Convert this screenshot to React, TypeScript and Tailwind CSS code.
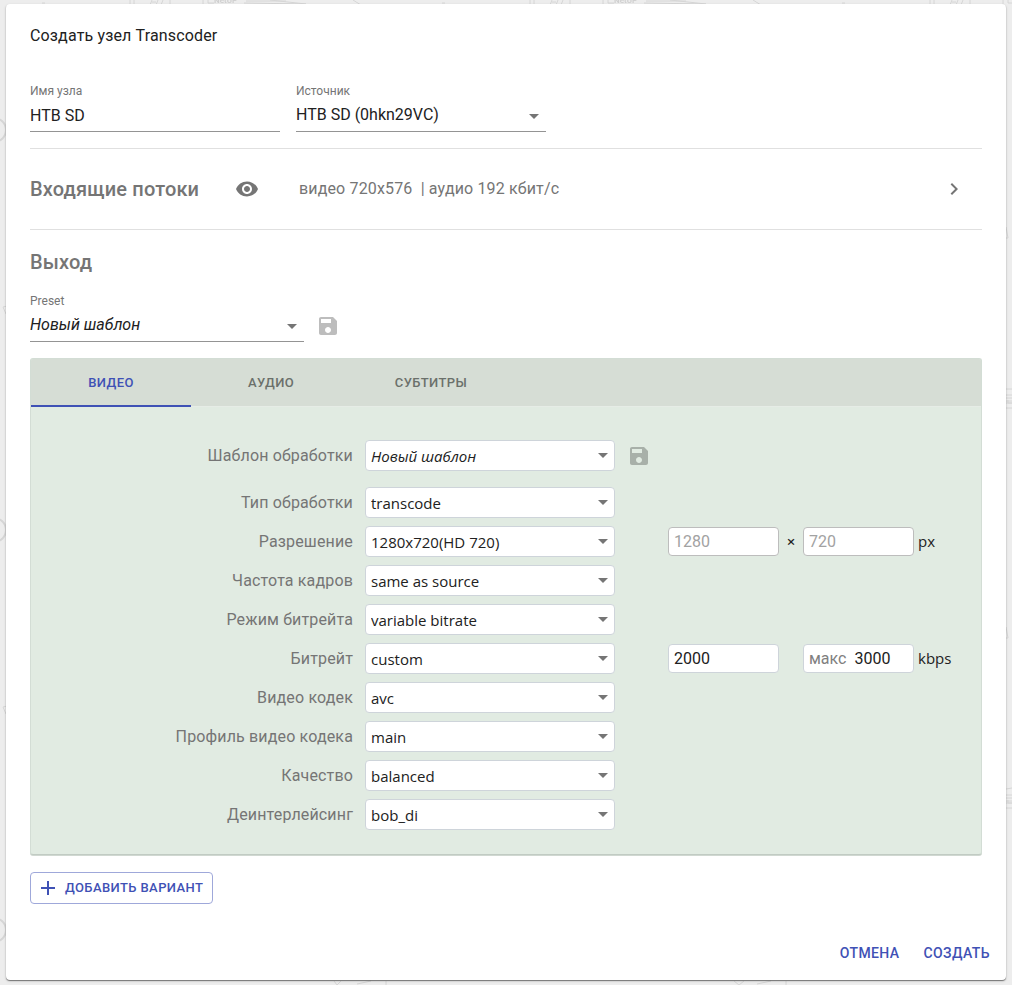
import { useState } from "react";
import type { ReactNode } from "react";

function DropArrow({ className }: { className: string }) {
  return (
    <svg viewBox="0 0 24 24" aria-hidden="true" className={`pointer-events-none absolute size-6 fill-[#757575] ${className}`}>
      <path d="M7 10l5 5 5-5z" />
    </svg>
  );
}

function SaveIcon({ className }: { className: string }) {
  return (
    <svg viewBox="0 0 24 24" aria-hidden="true" className={`size-6 ${className}`}>
      <path d="M17 3H5c-1.11 0-2 .9-2 2v14c0 1.1.89 2 2 2h14c1.1 0 2-.9 2-2V7l-4-4zm-5 16c-1.66 0-3-1.34-3-3s1.34-3 3-3 3 1.34 3 3-1.34 3-3 3zm3-10H5V5h10v4z" />
    </svg>
  );
}

function UnderlinedSelect({ id, label, value, className }: { id: string; label: string; value: string; className: string }) {
  return (
    <div className={className}>
      <label htmlFor={id} className="block text-xs leading-4 text-[#757575]">{label}</label>
      <div className="relative">
        <select id={id} defaultValue={value} className="h-[33px] w-full appearance-none border-b border-[#949494] bg-transparent pr-6 outline-none [font-style:inherit]">
          <option>{value}</option>
        </select>
        <DropArrow className="right-0 top-[5px]" />
      </div>
    </div>
  );
}

function FormRow({ id, label, value, italic = false, children }: { id: string; label: string; value: string; italic?: boolean; children?: ReactNode }) {
  return (
    <div className="flex h-[31px] items-center">
      <label htmlFor={id} className="w-[322px] shrink-0 text-right tracking-[0.15px] text-[#757575]">{label}</label>
      <div className="relative ml-3 w-[250px] shrink-0">
        <select
          id={id}
          defaultValue={value}
          className={`block h-[31px] w-full appearance-none rounded border border-[#ced4da] bg-white pt-0.5 pl-[5px] pr-6 font-['Open_Sans','Noto_Sans',sans-serif] text-[15px] outline-none ${italic ? "italic" : ""}`}
        >
          <option>{value}</option>
        </select>
        <DropArrow className="right-0 top-[3px]" />
      </div>
      {children}
    </div>
  );
}

function Backdrop() {
  return (
    <svg aria-hidden="true" className="absolute inset-0 size-full">
      <defs>
        <pattern id="doodles" width="400" height="400" patternUnits="userSpaceOnUse">
          <g fill="none" stroke="#d6d6d6">
            <circle cx="-6" cy="130" r="12" strokeWidth="2" />
            <path d="M3 307l4-1M3 307l3 7M42 3h3M130 0v5M134 0v5M150 5l2-5M156 5l2-5M152 2h4M163 0l-2 5M170 0v5M203 5V0M208 0v3h6M244 3l62 1M246 1h40M270 0l36 4M353 0l8 5" />
            <path d="M334 381l5 16M341 381l-3 14M357 388l29-6M386 381v6" />
          </g>
          <text x="214" y="3" fill="#d0d0d0" fontSize="8" fontWeight="700">NetUP</text>
        </pattern>
      </defs>
      <rect width="100%" height="100%" fill="url(#doodles)" />
      <path
        fill="none"
        stroke="#d6d6d6"
        d="M1006 227l2 11h-2M1006 389h6M1006 395h6M1006 398h6M1006 401h6M1006 403h6M1006 408h6M1006 627l2 11h-2M1006 789l6-1M1006 795h6M1006 798h6M1006 801h6M1006 803h6M1006 808h6M334 981l3 4 4-4M357 984l14-3M386 981v4M734 981l5 4 5-4M757 984l14-3M786 981v4"
      />
    </svg>
  );
}

const tabs = [
  { label: "Видео", width: "w-40" },
  { label: "Аудио", width: "w-40" },
  { label: "Субтитры", width: "w-40" },
];

const smallInput =
  "h-[29px] w-[111px] rounded border bg-white px-[5px] outline-none";

export default function App() {
  const [tab, setTab] = useState(0);
  return (
    <div className="relative min-h-screen bg-[#ededed] pt-1 pr-1.5 pb-[5px] pl-1.5 font-[Roboto,sans-serif] text-base text-[#212121]">
      <Backdrop />
      <main className="relative rounded bg-white shadow-[0_1px_1px_rgba(0,0,0,0.45),0_1px_3px_rgba(0,0,0,0.15)]">
        <div className="px-6 pt-5">
          <h1 className="leading-6 tracking-[0.15px]">Создать узел Transcoder</h1>

          <div className="mt-[35px] flex gap-4 border-b border-[#e0e0e0] pb-4">
            <div className="w-[250px]">
              <label htmlFor="node" className="block text-xs leading-4 text-[#757575]">Имя узла</label>
              <input id="node" defaultValue="НТВ SD" className="h-[33px] w-full border-b border-[#949494] bg-transparent outline-none" />
            </div>
            <UnderlinedSelect id="source" label="Источник" value="НТВ SD (0hkn29VC)" className="w-[250px]" />
          </div>

          <section className="flex h-[81px] items-center border-b border-[#e0e0e0]">
            <h2 className="w-[205px] text-xl font-medium tracking-[0.15px] text-[#757575]">Входящие потоки</h2>
            <button type="button" aria-label="Показать потоки">
              <svg viewBox="0 0 24 24" aria-hidden="true" className="size-6 fill-[#757575]">
                <path d="M12 4.5C7 4.5 2.73 7.61 1 12c1.73 4.39 6 7.5 11 7.5s9.27-3.11 11-7.5c-1.73-4.39-6-7.5-11-7.5zM12 17c-2.76 0-5-2.24-5-5s2.24-5 5-5 5 2.24 5 5-2.24 5-5 5zm0-8c-1.66 0-3 1.34-3 3s1.34 3 3 3 3-1.34 3-3-1.34-3-3-3z" />
              </svg>
            </button>
            <p className="ml-10 whitespace-pre tracking-[0.15px] text-[#757575]">{"видео 720x576  | аудио 192 кбит/с"}</p>
            <button type="button" aria-label="Развернуть" className="mr-4 ml-auto">
              <svg viewBox="0 0 24 24" aria-hidden="true" className="size-6 fill-[#757575]">
                <path d="M10 6L8.59 7.41 13.17 12l-4.58 4.59L10 18l6-6z" />
              </svg>
            </button>
          </section>

          <h2 className="pt-[18px] text-xl leading-7 font-medium tracking-[0.15px] text-[#757575]">Выход</h2>
          <div className="mt-[17px] flex items-end">
            <UnderlinedSelect id="preset" label="Preset" value="Новый шаблон" className="w-[274px] italic [&>label]:not-italic" />
            <button type="button" disabled aria-label="Сохранить preset" className="mb-1 ml-3">
              <SaveIcon className="fill-[#bdbdbd]" />
            </button>
          </div>

          <section className="mt-4 overflow-hidden rounded-[3px] border border-[#d3ddd5] border-b-[#c1cbc3] bg-[#e1ebe2] shadow-[0_1px_0_#d0d8d1]">
            <div role="tablist" className="flex h-12 border-b border-[#e6ece6] bg-[#d6ddd5]">
              {tabs.map((t, i) => (
                <button
                  key={t.label}
                  type="button"
                  role="tab"
                  aria-selected={tab === i}
                  onClick={() => setTab(i)}
                  className={`-mb-px h-12 border-b-2 pt-0.5 text-[13px] font-medium tracking-[0.4px] uppercase ${t.width} ${tab === i ? "border-[#3f51b5] text-[#3f51b5]" : "border-transparent text-[#6b706b]"}`}
                >
                  {t.label}
                </button>
              ))}
            </div>
            <div className="flex flex-col gap-2 pt-[33px] pb-6">
              <div className="mb-2">
                <FormRow id="template" label="Шаблон обработки" value="Новый шаблон" italic>
                  <button type="button" disabled aria-label="Сохранить шаблон" className="ml-3">
                    <SaveIcon className="fill-[#a8b0a9]" />
                  </button>
                </FormRow>
              </div>
              <FormRow id="type" label="Тип обработки" value="transcode" />
              <FormRow id="resolution" label="Разрешение" value="1280x720(HD 720)">
                <input aria-label="Ширина" disabled defaultValue="1280" className={`ml-[53px] border-[#bdbdbd] text-[#a2a2a2] ${smallInput}`} />
                <span className="w-6 text-center font-['Open_Sans','Noto_Sans',sans-serif] text-[15px] font-semibold">×</span>
                <input aria-label="Высота" disabled defaultValue="720" className={`border-[#bdbdbd] text-[#a2a2a2] ${smallInput}`} />
                <span className="ml-1 font-['Open_Sans','Noto_Sans',sans-serif] text-[15px]">px</span>
              </FormRow>
              <FormRow id="fps" label="Частота кадров" value="same as source" />
              <FormRow id="mode" label="Режим битрейта" value="variable bitrate" />
              <FormRow id="bitrate" label="Битрейт" value="custom">
                <input aria-label="Битрейт, kbps" defaultValue="2000" className={`ml-[53px] border-[#ced4da] ${smallInput}`} />
                <div className={`ml-6 flex items-center border-[#ced4da] ${smallInput}`}>
                  <label htmlFor="max" className="text-[#808080]">макс</label>
                  <input id="max" defaultValue="3000" className="ml-2 w-full min-w-0 outline-none" />
                </div>
                <span className="ml-1 font-['Open_Sans','Noto_Sans',sans-serif] text-[15px]">kbps</span>
              </FormRow>
              <FormRow id="codec" label="Видео кодек" value="avc" />
              <FormRow id="profile" label="Профиль видео кодека" value="main" />
              <FormRow id="quality" label="Качество" value="balanced" />
              <FormRow id="deint" label="Деинтерлейсинг" value="bob_di" />
            </div>
          </section>

          <button type="button" className="mt-[17px] flex h-8 items-center rounded border border-[#9fa8da] px-[5px] text-[13px] font-medium tracking-[0.4px] text-[#3f51b5] uppercase">
            <svg viewBox="0 0 24 24" aria-hidden="true" className="mr-[5px] size-6 fill-current">
              <path d="M19 13h-6v6h-2v-6H5v-2h6V5h2v6h6v2z" />
            </svg>
            <span className="pr-1">Добавить вариант</span>
          </button>
        </div>

        <footer className="mt-[31px] flex justify-end gap-2 px-2 pb-[9px] text-sm font-medium tracking-[0.4px] text-[#3f51b5]">
          <button type="button" className="h-9 px-2 uppercase">Отмена</button>
          <button type="button" className="h-9 px-2 uppercase">Создать</button>
        </footer>
      </main>
    </div>
  );
}
